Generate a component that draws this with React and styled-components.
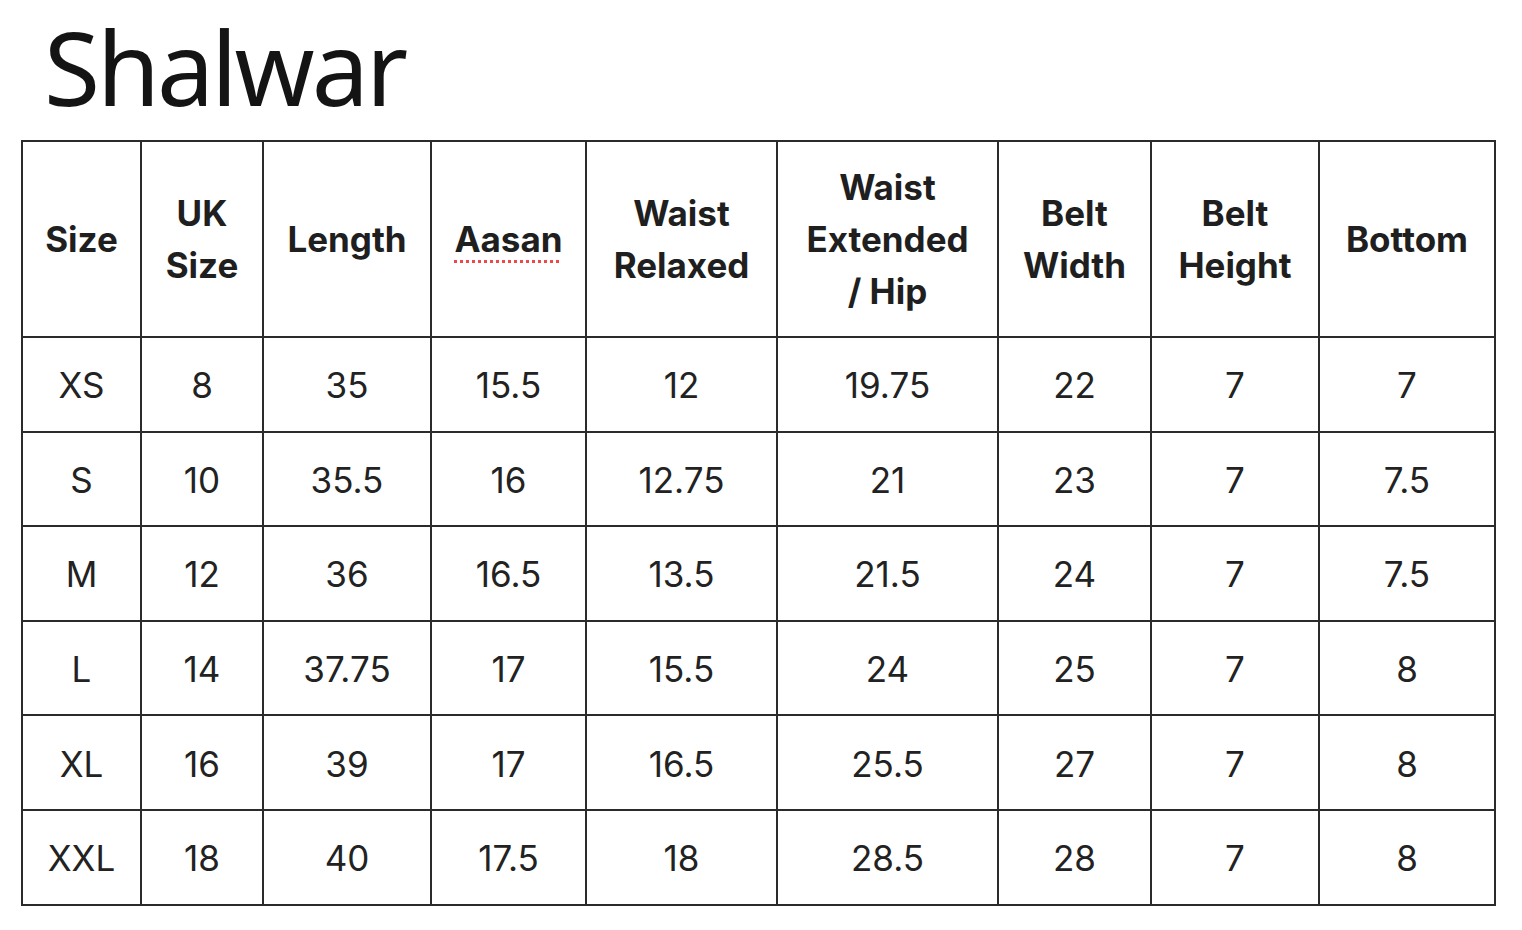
import React from 'react'
import styled, { createGlobalStyle } from 'styled-components'

const GlobalStyle = createGlobalStyle`
    body {
        margin: 0;
        background: #fff;
        font-family: Inter, "Liberation Sans", sans-serif;
    }
`

const Page = styled.div`
    padding: 0 0 0 21px;
`

const Title = styled.h1`
    margin: 0;
    padding: 0 0 6px 23px;
    font-family: "Noto Sans", "Open Sans", sans-serif;
    font-weight: 400;
    font-size: 102px;
    line-height: 134px;
    color: #141414;
    letter-spacing: -3px;
`

const Table = styled.table`
    border-collapse: collapse;
    table-layout: fixed;
    width: 1473px;
    border: 2px solid #2b2b2b;
`

const HeadCell = styled.th`
    height: 194px;
    padding: 0 4px;
    border: 2px solid #2b2b2b;
    font-size: 35px;
    font-weight: 700;
    line-height: 52px;
    color: #1f1f1f;
    text-align: center;
    vertical-align: middle;
`

const Cell = styled.td`
    height: 90.6px;
    padding: 2px 0 0;
    border: 2px solid #2b2b2b;
    font-size: 35px;
    font-weight: 400;
    color: #222;
    text-align: center;
    vertical-align: middle;
`

const Flagged = styled.span`
    text-decoration: underline dotted #f04848;
    text-decoration-thickness: 3px;
    text-underline-offset: 8px;
`

const widths = [119, 122, 168, 155, 191, 221, 153, 168, 176]

const headers = [
    'Size',
    <>UK<br />Size</>,
    'Length',
    <Flagged>Aasan</Flagged>,
    <>Waist<br />Relaxed</>,
    <>Waist<br />Extended<br />/ Hip</>,
    <>Belt<br />Width</>,
    <>Belt<br />Height</>,
    'Bottom',
]

const rows = [
    ['XS', '8', '35', '15.5', '12', '19.75', '22', '7', '7'],
    ['S', '10', '35.5', '16', '12.75', '21', '23', '7', '7.5'],
    ['M', '12', '36', '16.5', '13.5', '21.5', '24', '7', '7.5'],
    ['L', '14', '37.75', '17', '15.5', '24', '25', '7', '8'],
    ['XL', '16', '39', '17', '16.5', '25.5', '27', '7', '8'],
    ['XXL', '18', '40', '17.5', '18', '28.5', '28', '7', '8'],
]

export default function App() {
    return (
        <Page>
            <GlobalStyle />
            <Title>Shalwar</Title>
            <Table>
                <colgroup>
                    {widths.map((w, i) => <col key={i} style={{ width: w }} />)}
                </colgroup>
                <thead>
                    <tr>
                        {headers.map((h, i) => <HeadCell key={i}>{h}</HeadCell>)}
                    </tr>
                </thead>
                <tbody>
                    {rows.map((row, i) => (
                        <tr key={i}>
                            {row.map((v, j) => <Cell key={j}>{v}</Cell>)}
                        </tr>
                    ))}
                </tbody>
            </Table>
        </Page>
    )
}
